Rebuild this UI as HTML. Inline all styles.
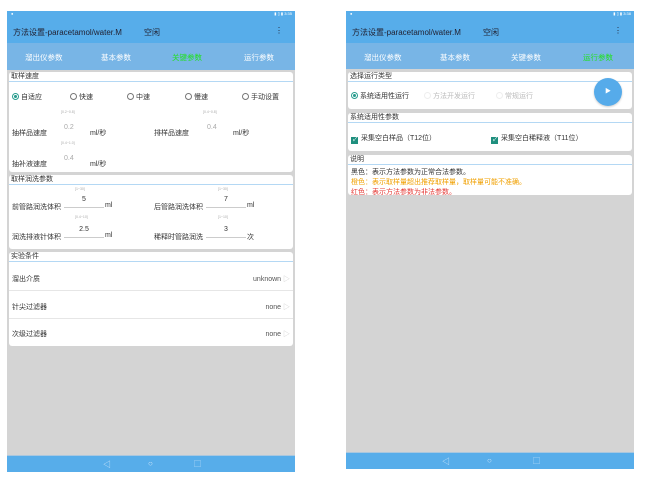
<!DOCTYPE html>
<html><head><meta charset="utf-8"><style>
*{margin:0;padding:0;box-sizing:border-box}
body{width:654px;height:481px;background:#fff;position:relative;overflow:hidden;font-family:"Liberation Sans","Noto Sans CJK SC",sans-serif;color:#333}
.scr{position:absolute;top:11px;background:#d4d4d4}
.status{position:absolute;left:0;right:0;top:0;height:5px;background:#57adea;color:#fff;font-size:4px}
.title{position:absolute;left:0;right:0;top:5px;height:27px;background:#57adea;color:#223;font-size:8px}
.tabs{position:absolute;left:0;right:0;top:32px;height:27px;background:#78b5e6;color:#fff;font-size:7.5px}
.tabs span{position:absolute;top:9px}
.card{position:absolute;left:2px;right:2px;background:#fff;border-radius:3px;font-size:7px}
.ch{height:10px;line-height:10px;padding-left:2px;border-bottom:1.5px solid #b4d8f4;font-size:7px}
.a{position:absolute;white-space:nowrap}
.nav{position:absolute;left:0;right:0;height:17px;background:#57adea;border-top:1px solid #a9c7df}
.rad{display:inline-block;width:7px;height:7px;border:1px solid #777;border-radius:50%;vertical-align:-1px;margin-right:2px}
.rad.on{border-color:#2a9d8f;background:radial-gradient(#2a9d8f 40%,#fff 45%)}
.hint{font-size:3.5px;color:#aaa}
.ul{border-bottom:1px solid #ccc;width:40px;text-align:center}
.sep{position:absolute;left:0;right:0;border-top:1px solid #e6e6e6}
.cb{display:inline-block;width:7px;height:7px;background:#1e8f7e;vertical-align:-1px;margin-right:3px;color:#fff;font-size:6px;line-height:7px;text-align:center}
</style></head><body>

<!-- LEFT -->
<div class="scr" style="left:7px;width:288px;height:461px">
 <div class="status"><span class="a" style="left:4px;top:0">●</span><span class="a" style="right:3px;top:0">▮ ▯ ▮ 3:35</span></div>
 <div class="title"><span class="a" style="left:6px;top:11px">方法设置-paracetamol/water.M</span><span class="a" style="left:137px;top:11px">空闲</span><span class="a" style="right:12px;top:10px">⋮</span></div>
 <div class="tabs"><span style="left:18px">溜出仪参数</span><span style="left:94px">基本参数</span><span style="left:165px;color:#22e022">关键参数</span><span style="left:237px">运行参数</span></div>
 <div class="card" style="top:61px;height:100px">
  <div class="ch">取样速度</div>
  <span class="a" style="left:3px;top:20px"><i class="rad on"></i>自适应</span>
  <span class="a" style="left:61px;top:20px"><i class="rad"></i>快速</span>
  <span class="a" style="left:118px;top:20px"><i class="rad"></i>中速</span>
  <span class="a" style="left:176px;top:20px"><i class="rad"></i>慢速</span>
  <span class="a" style="left:233px;top:20px"><i class="rad"></i>手动设置</span>
  <span class="a hint" style="left:52px;top:38px">[0.2~0.8]</span><span class="a hint" style="left:194px;top:38px">[0.4~0.8]</span>
  <span class="a" style="left:3px;top:56px">抽样品速度</span><span class="a" style="left:55px;top:52px;color:#aaa">0.2</span><span class="a" style="left:81px;top:56px">ml/秒</span>
  <span class="a" style="left:145px;top:56px">排样品速度</span><span class="a" style="left:198px;top:52px;color:#aaa">0.4</span><span class="a" style="left:224px;top:56px">ml/秒</span>
  <span class="a hint" style="left:52px;top:69px">[0.4~1.0]</span>
  <span class="a" style="left:3px;top:87px">抽补液速度</span><span class="a" style="left:55px;top:83px;color:#aaa">0.4</span><span class="a" style="left:81px;top:87px">ml/秒</span>
 </div>
 <div class="card" style="top:164px;height:74px">
  <div class="ch">取样润洗参数</div>
  <span class="a hint" style="left:66px;top:12px">[1~30]</span><span class="a hint" style="left:209px;top:12px">[1~30]</span>
  <span class="a" style="left:3px;top:27px">前管路润洗体积</span><span class="a ul" style="left:55px;top:21px;height:12px">5</span><span class="a" style="left:96px;top:27px">ml</span>
  <span class="a" style="left:145px;top:27px">后管路润洗体积</span><span class="a ul" style="left:197px;top:21px;height:12px">7</span><span class="a" style="left:238px;top:27px">ml</span>
  <span class="a hint" style="left:66px;top:40px">[0.4~10]</span><span class="a hint" style="left:209px;top:40px">[1~10]</span>
  <span class="a" style="left:3px;top:57px">润洗排液针体积</span><span class="a ul" style="left:55px;top:51px;height:12px">2.5</span><span class="a" style="left:96px;top:57px">ml</span>
  <span class="a" style="left:145px;top:57px">稀释时管路润洗</span><span class="a ul" style="left:197px;top:51px;height:12px">3</span><span class="a" style="left:238px;top:57px">次</span>
 </div>
 <div class="card" style="top:241px;height:94px">
  <div class="ch">实验条件</div>
  <span class="a" style="left:3px;top:22px">溜出介质</span><span class="a" style="right:3px;top:22px;color:#555">unknown <span style="color:#ccc">▷</span></span>
  <div class="sep" style="top:38px"></div>
  <span class="a" style="left:3px;top:50px">针尖过滤器</span><span class="a" style="right:3px;top:50px;color:#555">none <span style="color:#ccc">▷</span></span>
  <div class="sep" style="top:66px"></div>
  <span class="a" style="left:3px;top:77px">次级过滤器</span><span class="a" style="right:3px;top:77px;color:#555">none <span style="color:#ccc">▷</span></span>
 </div>
 <div class="nav" style="top:444px"><span class="a" style="left:96px;top:3px;color:#cfe6fa;font-size:8px">◁</span><span class="a" style="left:141px;top:3px;color:#cfe6fa;font-size:8px">○</span><span class="a" style="left:187px;top:3px;color:#cfe6fa;font-size:7px">▢</span></div>
</div>

<!-- RIGHT -->
<div class="scr" style="left:346px;width:288px;height:458px">
 <div class="status"><span class="a" style="left:4px;top:0">●</span><span class="a" style="right:3px;top:0">▮ ▯ ▮ 3:38</span></div>
 <div class="title"><span class="a" style="left:6px;top:11px">方法设置-paracetamol/water.M</span><span class="a" style="left:137px;top:11px">空闲</span><span class="a" style="right:12px;top:10px">⋮</span></div>
 <div class="tabs" style="height:26px"><span style="left:18px">溜出仪参数</span><span style="left:94px">基本参数</span><span style="left:165px">关键参数</span><span style="left:237px;color:#22e022">运行参数</span></div>
 <div class="card" style="top:61px;height:37px">
  <div class="ch">选择运行类型</div>
  <span class="a" style="left:3px;top:19px"><i class="rad on"></i>系统适用性运行</span>
  <span class="a" style="left:76px;top:19px;color:#bbb"><i class="rad" style="border-color:#eee"></i>方法开发运行</span>
  <span class="a" style="left:148px;top:19px;color:#bbb"><i class="rad" style="border-color:#eee"></i>常规运行</span>
 </div>
 <div class="a" style="left:248px;top:67px;width:28px;height:28px;border-radius:50%;background:#56abea;box-shadow:0 1px 2px rgba(0,0,0,.2);color:#fff;font-size:6px;text-align:center;line-height:28px">▶</div>
 <div class="card" style="top:102px;height:38px">
  <div class="ch">系统适用性参数</div>
  <span class="a" style="left:3px;top:20px"><i class="cb">✓</i>采集空白样品（T12位）</span>
  <span class="a" style="left:143px;top:20px"><i class="cb">✓</i>采集空白稀释液（T11位）</span>
 </div>
 <div class="card" style="top:144px;height:40px">
  <div class="ch">说明</div>
  <span class="a" style="left:3px;top:12px">黑色：表示方法参数为正常合法参数。</span>
  <span class="a" style="left:3px;top:22px;color:#f0a000">橙色：表示取样量超出推荐取样量，取样量可能不准确。</span>
  <span class="a" style="left:3px;top:32px;color:#e53935">红色：表示方法参数为非法参数。</span>
 </div>
 <div class="nav" style="top:441px"><span class="a" style="left:96px;top:3px;color:#cfe6fa;font-size:8px">◁</span><span class="a" style="left:141px;top:3px;color:#cfe6fa;font-size:8px">○</span><span class="a" style="left:187px;top:3px;color:#cfe6fa;font-size:7px">▢</span></div>
</div>
</body></html>
